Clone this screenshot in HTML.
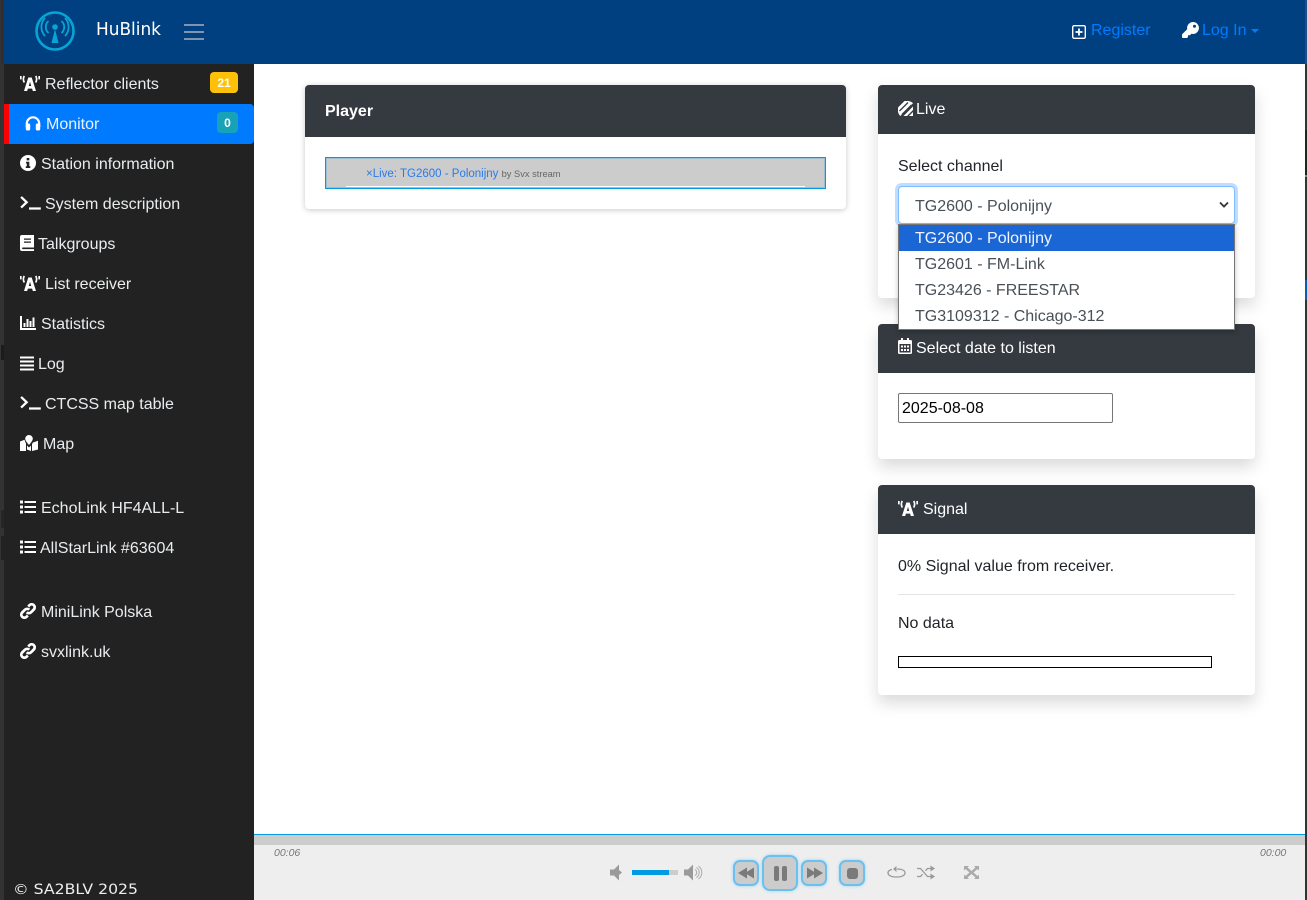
<!DOCTYPE html>
<html><head><meta charset="utf-8"><title>HuBlink</title>
<style>
*{box-sizing:border-box}
html,body{margin:0;padding:0;width:1307px;height:900px;overflow:hidden;background:#fff;font-family:"Liberation Sans",sans-serif;font-size:16px;color:#212529}
.a{position:absolute}
.t{position:absolute;line-height:24px;white-space:nowrap;margin-top:3px}
.s{color:#e9ecef}
.i{position:absolute;fill:#fff}
.card{position:absolute;background:#fff;border-radius:4px;box-shadow:0 8px 16px rgba(0,0,0,.15);}
.hd{position:absolute;left:0;top:0;width:100%;background:#343a40;border-radius:4px 4px 0 0;color:#fff}
.opt{position:absolute;left:1px;width:334px;height:26px;line-height:28px;padding-left:16px;color:#495057;white-space:nowrap}
.pb{position:absolute;background:#ccc;border:2px solid #6cc0ee;border-radius:7px;box-shadow:0 0 3px #9ad6f5}
.g{fill:#7a7a7a}
.sp{fill:#9a9a9a}
</style></head><body>
<svg width="0" height="0" style="position:absolute"><defs>
<symbol id="tw" viewBox="0 0 20 16"><path d="M8.300 2.500h3.400L16 16h-3.200l-.7-2.400H7.900L7.200 16H4zM8.800 11h2.400L10 6.800z"/><path fill="none" stroke="#fff" stroke-width="1.700" d="M.8 1v3.400M4.300 1C3 3 3 5 4.300 7.500M19.200 1v3.400M15.700 1C17 3 17 5 15.700 7.500"/></symbol>
<symbol id="term" viewBox="0 0 21 14"><path d="M.3 1.700 1.900.1l6.400 6.100-6.400 6.200-1.600-1.600 4.700-4.600zM9 11.400h11.800v2.200H9z"/></symbol>
<symbol id="list" viewBox="0 0 16 14"><path d="M0 .5h3v3H0zM0 5.500h3v3H0zM0 10.500h3v3H0zM4.500 1h11.500v2H4.500zM4.500 6h11.500v2H4.500zM4.500 11h11.500v2H4.500z"/></symbol>
<symbol id="link" viewBox="0 0 16 16"><path fill="none" stroke="#fff" stroke-width="2.700" d="M6.700 9.300a3 3 0 0 0 4.300 0l2.800-2.800a3 3 0 0 0-4.300-4.300L8.200 3.500M9.300 6.700a3 3 0 0 0-4.300 0L2.200 9.500a3 3 0 0 0 4.300 4.300l1.300-1.300"/></symbol>
</defs></svg>

<!-- left edge strip -->
<div class="a" style="left:0;top:0;width:4px;height:900px;background:#333"></div>
<div class="a" style="left:1px;top:0;width:3px;height:64px;background:#2f2f2f"></div>
<div class="a" style="left:1px;top:345px;width:3px;height:15px;background:#1c1c1c"></div>
<div class="a" style="left:1px;top:510px;width:3px;height:18px;background:#262626"></div>
<div class="a" style="left:1px;top:536px;width:3px;height:24px;background:#222"></div>
<div class="a" style="left:1305px;top:0;width:2px;height:900px;background:#333"></div>
<div class="a" style="left:1305px;top:0;width:2px;height:64px;background:#1d4e85"></div>
<div class="a" style="left:1305px;top:175px;width:2px;height:2px;background:#888"></div>
<div class="a" style="left:1305px;top:280px;width:2px;height:20px;background:#0a5cb0"></div>
<div class="a" style="left:1305px;top:130px;width:2px;height:45px;background:#222"></div>

<!-- navbar -->
<div class="a" style="left:4px;top:0;width:1301px;height:64px;background:#004080"></div>
<svg class="a" style="left:34px;top:10px" width="42" height="42" viewBox="0 0 42 42" fill="none" stroke="#06a5d4">
<circle cx="21" cy="21" r="18.500" stroke-width="2.600"/>
<circle cx="21" cy="17" r="2.800" fill="#06a5d4" stroke="none"/>
<path d="M21 19l3.500 14h-7z" fill="#06a5d4" stroke="none"/>
<path stroke-width="1.800" d="M14.500 23a8 8 0 0 1 0-12M27.500 11a8 8 0 0 1 0 12M11 26a13 13 0 0 1 0-18M31 8a13 13 0 0 1 0 18"/>
</svg>
<svg class="a" style="left:94px;top:18px" width="70" height="22"><text x="2" y="17" font-family="'DejaVu Sans',sans-serif" font-size="18" fill="#fff" textLength="65" lengthAdjust="spacingAndGlyphs">HuBlink</text></svg>
<svg class="a" style="left:184px;top:24px" width="20" height="16"><path d="M0 1h20M0 8h20M0 15h20" stroke="#7d95b3" stroke-width="2"/></svg>
<svg class="a" style="left:1072px;top:25px" width="14" height="14" viewBox="0 0 14 14"><rect x=".7" y=".7" width="12.600" height="12.600" rx="1.500" fill="none" stroke="#fff" stroke-width="1.400"/><path d="M3.500 7h7M7 3.500v7" stroke="#fff" stroke-width="1.800"/></svg>
<div class="t" style="left:1091px;top:16px;color:#007bff">Register</div>
<svg class="a" style="left:1182px;top:22px" width="17" height="16" viewBox="0 0 17 16"><path fill="#fff" d="M11 0a6 6 0 1 1-1.600 11.800L8 13.200H6V15l-1 1H1a1 1 0 0 1-1-1v-2.600l5.200-5.200A6 6 0 0 1 11 0z"/><circle cx="12.500" cy="4.300" r="1.500" fill="#004080"/></svg>
<div class="t" style="left:1202px;top:16px;color:#007bff">Log In</div>
<div class="a" style="left:1251px;top:29px;width:0;height:0;border:4.500px solid transparent;border-top-color:#007bff;border-bottom:0"></div>

<!-- sidebar -->
<div class="a" style="left:4px;top:64px;width:250px;height:836px;background:#222"></div>
<div class="a" style="left:4px;top:104px;width:250px;height:40px;background:#007bff;border-radius:0 4px 4px 0;border-left:5px solid #f00"></div>

<svg class="i" style="left:20px;top:75px" width="20" height="16"><use href="#tw"/></svg>
<div class="t s" style="left:45px;top:70px">Reflector clients</div>
<div class="a" style="left:210px;top:72px;width:28px;height:21px;background:#ffc107;border-radius:4px;color:#fff;font-size:12px;font-weight:700;text-align:center;line-height:23px">21</div>

<svg class="a" style="left:25px;top:115px" width="16" height="16" viewBox="0 0 16 16"><path fill="none" stroke="#fff" stroke-width="2.200" d="M1.800 12V8.500a6.200 6.200 0 0 1 12.400 0V12"/><rect x=".8" y="8.500" width="4.400" height="7" rx="1.500" fill="#fff"/><rect x="10.800" y="8.500" width="4.400" height="7" rx="1.500" fill="#fff"/></svg>
<div class="t" style="left:46px;top:110px;color:#e9f2ff">Monitor</div>
<div class="a" style="left:217px;top:112px;width:21px;height:21px;background:#17a2b8;border-radius:4px;color:#fff;font-size:12px;font-weight:700;text-align:center;line-height:23px">0</div>

<svg class="a" style="left:20px;top:155px" width="16" height="16" viewBox="0 0 16 16"><circle cx="8" cy="8" r="8" fill="#fff"/><path fill="#222" d="M6.700 3h2.600v2.400H6.700zM6 6.700h3.300v4.500h1V13H5.800v-1.800h1V8.400H6z"/></svg>
<div class="t s" style="left:41px;top:150px">Station information</div>

<svg class="i" style="left:20px;top:196px" width="21" height="14"><use href="#term"/></svg>
<div class="t s" style="left:45px;top:190px">System description</div>

<svg class="a" style="left:20px;top:235px" width="14" height="16" viewBox="0 0 14 16"><path fill="#fff" d="M2 0h12v12.500H2.500a1 1 0 0 0 0 1.600H14V16H2a2 2 0 0 1-2-2V2a2 2 0 0 1 2-2z"/><path fill="#222" d="M4 3.500h7v1.300H4zM4 6.500h7v1.300H4z"/></svg>
<div class="t s" style="left:38px;top:230px">Talkgroups</div>

<svg class="i" style="left:20px;top:275px" width="20" height="16"><use href="#tw"/></svg>
<div class="t s" style="left:45px;top:270px">List receiver</div>

<svg class="a" style="left:20px;top:316px" width="16" height="14" viewBox="0 0 16 14"><path fill="#fff" d="M0 0h2v12h14v2H0zM3.500 7h2v4h-2zM6.500 3h2v8h-2zM9.500 5h2v6h-2zM12.500 1.500h2V11h-2z"/></svg>
<div class="t s" style="left:41px;top:310px">Statistics</div>

<svg class="a" style="left:20px;top:356px" width="14" height="15" viewBox="0 0 14 15"><path fill="#fff" d="M0 .5h14v2H0zM0 4.500h14v2H0zM0 8.500h14v2H0zM0 12.500h14v2H0z"/></svg>
<div class="t s" style="left:38px;top:350px">Log</div>

<svg class="i" style="left:20px;top:396px" width="21" height="14"><use href="#term"/></svg>
<div class="t s" style="left:45px;top:390px">CTCSS map table</div>

<svg class="a" style="left:20px;top:435px" width="18" height="16" viewBox="0 0 18 16"><path fill="#fff" d="M9 0a3.800 3.800 0 0 1 3.800 3.800c0 1.700-2.300 4.500-3.800 6.200C7.500 8.300 5.200 5.500 5.200 3.800A3.800 3.800 0 0 1 9 0zM0 6.500l4.500-1.700.7 2L6 8.500V16l-6 0zM7 10.500l2 2 2-2V16l-4-1.500zM12 9l1-1.500 5-1.700V14.500L12 16z"/></svg>
<div class="t s" style="left:43px;top:430px">Map</div>

<svg class="i" style="left:20px;top:500px" width="16" height="14"><use href="#list"/></svg>
<div class="t s" style="left:41px;top:494px">EchoLink HF4ALL-L</div>

<svg class="i" style="left:20px;top:540px" width="16" height="14"><use href="#list"/></svg>
<div class="t s" style="left:40px;top:534px">AllStarLink #63604</div>

<svg class="a" style="left:20px;top:603px" width="16" height="16"><use href="#link"/></svg>
<div class="t s" style="left:41px;top:598px">MiniLink Polska</div>

<svg class="a" style="left:20px;top:643px" width="16" height="16"><use href="#link"/></svg>
<div class="t s" style="left:41px;top:638px">svxlink.uk</div>

<svg class="a" style="left:12px;top:878px" width="130" height="20"><text x="1" y="16" font-family="'DejaVu Sans',sans-serif" font-size="14" fill="#eee" textLength="125" lengthAdjust="spacingAndGlyphs">© SA2BLV 2025</text></svg>

<!-- Player card -->
<div class="card" style="left:305px;top:85px;width:541px;height:124px;box-shadow:0 1px 6px rgba(0,0,0,.22)">
  <div class="hd" style="height:52px"></div>
  <div class="t" style="left:20px;top:12px;color:#fff;font-weight:700">Player</div>
  <div class="a" style="left:20px;top:72px;width:501px;height:32px;background:#ccc;border:1px solid #009be3;box-shadow:inset 0 0 0 1px rgba(0,155,227,.25)">
    <div class="a" style="left:20px;bottom:1px;right:20px;height:1px;background:#fff"></div>
    <div class="t" style="left:40px;top:1px;font-size:11.500px;color:#2a7be8">×Live: TG2600 - Polonijny <span style="font-size:9.300px;color:#666">by Svx stream</span></div>
  </div>
</div>

<!-- Live card -->
<div class="card" style="left:878px;top:85px;width:377px;height:213px">
  <div class="hd" style="height:49px"></div>
  <svg class="a" style="left:20px;top:16px" width="15" height="15" viewBox="0 0 15 15"><path fill="#fff" d="M0 6.500 6.500 0c3-.6 6 0 8.500 2.200L2.200 15C0 12.500-.6 9.500 0 6.500z"/><path fill="none" stroke="#343a40" stroke-width="1.300" d="M1.500 10 10 1.500M4 13.500 13.500 4"/><path fill="#fff" d="M15 5.500V9L9 15H5.500z"/><path fill="#fff" d="M15 11v4h-4z"/></svg>
  <div class="t" style="left:38px;top:10px;color:#fff">Live</div>
  <div class="t" style="left:20px;top:67px">Select channel</div>
</div>
<div class="a" style="left:898px;top:186px;width:337px;height:38px;background:#fff;border:1px solid #80bdff;border-radius:4px;box-shadow:0 0 0 3px rgba(0,123,255,.25);color:#495057;padding-left:16px;line-height:39px">TG2600 - Polonijny
  <svg class="a" style="right:5px;top:14px" width="10" height="8" viewBox="0 0 10 8"><path d="M1 1.500l4 4 4-4" fill="none" stroke="#343a40" stroke-width="1.900"/></svg>
</div>
<div class="a" style="left:898px;top:224px;width:337px;height:106px;background:#fff;border:1px solid #767676;box-shadow:0 2px 5px rgba(0,0,0,.25);z-index:3">
  <div class="opt" style="left:0;top:0;width:335px;background:#1a66d4;color:#f0f5ff;">TG2600 - Polonijny</div>
  <div class="opt" style="left:0;top:26px">TG2601 - FM-Link</div>
  <div class="opt" style="left:0;top:52px">TG23426 - FREESTAR</div>
  <div class="opt" style="left:0;top:78px">TG3109312 - Chicago-312</div>
</div>

<!-- Date card -->
<div class="card" style="left:878px;top:324px;width:377px;height:135px">
  <div class="hd" style="height:49px"></div>
  <svg class="a" style="left:20px;top:14px" width="14" height="16" viewBox="0 0 14 16"><path fill="#fff" d="M3 0h2v2h4V0h2v2h1.500A1.500 1.500 0 0 1 14 3.500v11a1.500 1.500 0 0 1-1.500 1.500h-11A1.500 1.500 0 0 1 0 14.500v-11A1.500 1.500 0 0 1 1.500 2H3z"/><path fill="#343a40" d="M1.500 6h11v8.500h-11z"/><path fill="#fff" d="M3 7.500h2v2H3zM6 7.500h2v2H6zM9 7.500h2v2H9zM3 11h2v2H3zM6 11h2v2H6zM9 11h2v2H9z"/></svg>
  <div class="t" style="left:38px;top:10px;color:#fff">Select date to listen</div>
  <div class="a" style="left:20px;top:69px;width:215px;height:30px;border:1px solid #767676;border-radius:2px;color:#000;padding-left:3px;line-height:29px">2025-08-08</div>
</div>

<!-- Signal card -->
<div class="card" style="left:878px;top:485px;width:377px;height:210px">
  <div class="hd" style="height:49px"></div>
  <svg class="i" style="left:20px;top:15px" width="20" height="16"><use href="#tw"/></svg>
  <div class="t" style="left:45px;top:10px;color:#fff">Signal</div>
  <div class="t" style="left:20px;top:67px">0% Signal value from receiver.</div>
  <div class="a" style="left:20px;top:109px;width:337px;height:1px;background:#e4e4e4"></div>
  <div class="t" style="left:20px;top:124px">No data</div>
  <div class="a" style="left:20px;top:171px;width:314px;height:12px;border:1px solid #000;background:#fff"></div>
</div>

<!-- Bottom player -->
<div class="a" style="left:254px;top:834px;width:1051px;height:66px;background:#eee;border-top:1px solid #009be3"></div>
<div class="a" style="left:254px;top:835px;width:1051px;height:10px;background:#ccc"></div>
<div class="t" style="left:274px;top:838px;font-size:10.500px;font-style:italic;color:#777">00:06</div>
<div class="t" style="left:1260px;top:838px;font-size:10.500px;font-style:italic;color:#777">00:00</div>

<svg class="a sp" style="left:609px;top:864px" width="14" height="17" viewBox="0 0 14 17"><path d="M1 5.500h4L10 .5v16l-5-5H1z"/><path d="M10 6l3 2.500-3 2.500z"/></svg>
<div class="a" style="left:632px;top:870px;width:46px;height:5px;background:#ccc"></div>
<div class="a" style="left:632px;top:870px;width:37px;height:5px;background:#009be3"></div>
<svg class="a" style="left:684px;top:864px" width="19" height="17" viewBox="0 0 19 17"><path class="sp" d="M0 5.500h4L9 .5v16l-5-5H0z"/><path fill="none" stroke="#aaa" stroke-width="1" d="M11 5.500a3.500 3.500 0 0 1 0 6M12.500 3.500a6 6 0 0 1 0 10M14.500 2a8 8 0 0 1 0 13"/></svg>

<div class="pb" style="left:733px;top:860px;width:26px;height:26px"></div>
<svg class="a g" style="left:738px;top:867px" width="16" height="12" viewBox="0 0 16 12"><path d="M9 .5v11L0 6zM16 .5v11L7 6z"/></svg>
<div class="pb" style="left:762px;top:855px;width:36px;height:36px;border-radius:8px"></div>
<div class="a" style="left:774px;top:866px;width:5px;height:15px;background:#7a7a7a;border-radius:2px"></div>
<div class="a" style="left:782px;top:866px;width:5px;height:15px;background:#7a7a7a;border-radius:2px"></div>
<div class="pb" style="left:801px;top:860px;width:26px;height:26px"></div>
<svg class="a g" style="left:807px;top:867px" width="16" height="12" viewBox="0 0 16 12"><path d="M0 .5v11L9 6zM7 .5v11L16 6z"/></svg>
<div class="pb" style="left:839px;top:860px;width:26px;height:26px"></div>
<div class="a" style="left:847px;top:868px;width:11px;height:11px;background:#7a7a7a;border-radius:3px"></div>

<svg class="a" style="left:887px;top:865px" width="19" height="15" viewBox="0 0 19 15"><path fill="none" stroke="#999" stroke-width="1.300" d="M5 4.500C2 5 1 6.500 1 8c0 2.500 3.500 4 8.500 4S18 10.500 18 8c0-2.500-3-4-8-4"/><path fill="#999" d="M9.500 1v6L6 4z"/></svg>
<svg class="a" style="left:917px;top:865px" width="18" height="15" viewBox="0 0 18 15"><path fill="none" stroke="#999" stroke-width="1.300" d="M0 3.500h3.500l7 8H14M0 11.500h3.500l2-2.300M8.500 5.800l2-2.300H14"/><path fill="#999" d="M13.500 .5l4.500 3-4.500 3zM13.500 8.500l4.500 3-4.500 3z"/></svg>
<svg class="a" style="left:964px;top:866px" width="15" height="13" viewBox="0 0 15 13"><path fill="#aaa" d="M0 0h5L3.500 1.500 7.500 5 11.500 1.500 10 0h5v4.500L13.500 3 9.500 6.500l4 3.500L15 8.500V13h-5l1.500-1.500L7.500 8l-4 3.500L5 13H0V8.500L1.500 10l4-3.500-4-3.500L0 4.500z"/></svg>
</body></html>
